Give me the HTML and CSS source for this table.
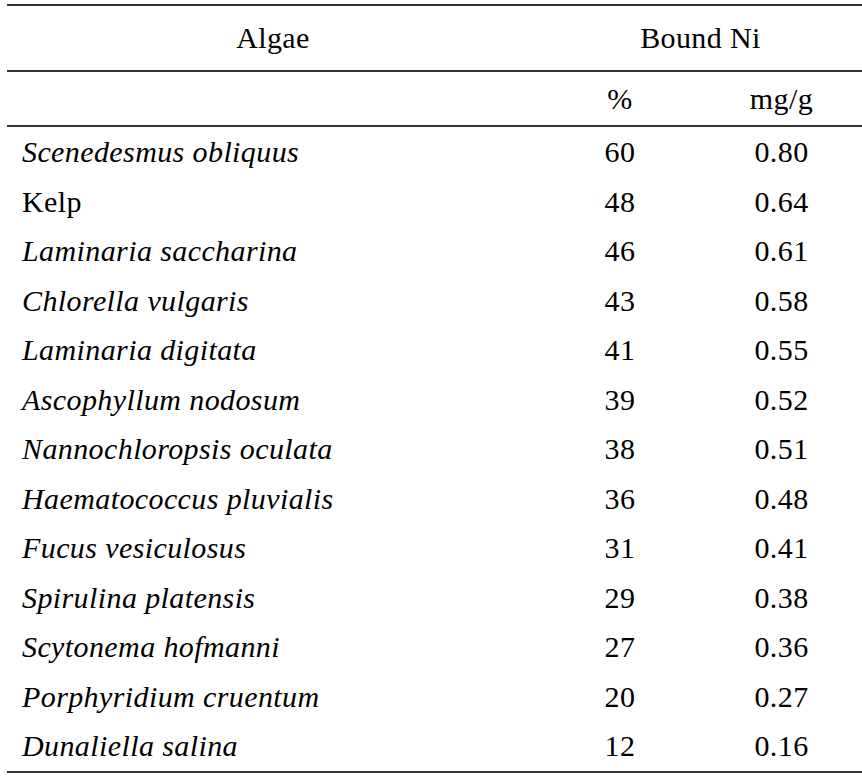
FILE: index.html
```html
<!DOCTYPE html>
<html lang="en">
<head>
<meta charset="utf-8">
<title>Bound Ni by algae</title>
<link rel="stylesheet" href="styles.css">
</head>
<body>
<div class="wrap">
<table class="data">
  <colgroup>
    <col class="c-name">
    <col class="c-pct">
    <col class="c-mg">
  </colgroup>
  <thead>
    <tr class="head1">
      <th class="h-algae">Algae</th>
      <th class="h-group" colspan="2">Bound Ni</th>
    </tr>
    <tr class="head2">
      <th></th>
      <th>%</th>
      <th>mg/g</th>
    </tr>
  </thead>
  <tbody>
    <tr><td class="name"><i>Scenedesmus obliquus</i></td><td>60</td><td>0.80</td></tr>
    <tr><td class="name">Kelp</td><td>48</td><td>0.64</td></tr>
    <tr><td class="name"><i>Laminaria saccharina</i></td><td>46</td><td>0.61</td></tr>
    <tr><td class="name"><i>Chlorella vulgaris</i></td><td>43</td><td>0.58</td></tr>
    <tr><td class="name"><i>Laminaria digitata</i></td><td>41</td><td>0.55</td></tr>
    <tr><td class="name"><i>Ascophyllum nodosum</i></td><td>39</td><td>0.52</td></tr>
    <tr><td class="name"><i>Nannochloropsis oculata</i></td><td>38</td><td>0.51</td></tr>
    <tr><td class="name"><i>Haematococcus pluvialis</i></td><td>36</td><td>0.48</td></tr>
    <tr><td class="name"><i>Fucus vesiculosus</i></td><td>31</td><td>0.41</td></tr>
    <tr><td class="name"><i>Spirulina platensis</i></td><td>29</td><td>0.38</td></tr>
    <tr><td class="name"><i>Scytonema hofmanni</i></td><td>27</td><td>0.36</td></tr>
    <tr><td class="name"><i>Porphyridium cruentum</i></td><td>20</td><td>0.27</td></tr>
    <tr class="last"><td class="name"><i>Dunaliella salina</i></td><td>12</td><td>0.16</td></tr>
  </tbody>
</table>
</div>
</body>
</html>
```

FILE: styles.css
```css
html, body {
  margin: 0;
  padding: 0;
  background: #ffffff;
}

.wrap {
  padding: 4px 0 0 7px;
}

.data {
  width: 855px;
  table-layout: fixed;
  border-collapse: separate;
  border-spacing: 0;
  font-family: "Liberation Serif", "Times New Roman", Times, serif;
  font-size: 30px;
  letter-spacing: 0.4px;
  color: #000000;
}

.c-name { width: 532px; }
.c-pct { width: 162px; }
.c-mg { width: 161px; }

.data th,
.data td {
  padding: 0;
  font-family: inherit;
  font-weight: normal;
  text-align: center;
  white-space: nowrap;
}

.head1 th {
  line-height: 64px;
  border-top: 2px solid #333333;
  border-bottom: 2px solid #333333;
}

.head2 th {
  line-height: 53px;
  border-bottom: 2px solid #333333;
}

.data tbody td {
  line-height: 49.5px;
}

.data td.name {
  text-align: left;
  padding-left: 15px;
}

.data i {
  font-family: inherit;
  font-style: italic;
}

.data tr.last td {
  border-bottom: 2px solid #333333;
}
```
